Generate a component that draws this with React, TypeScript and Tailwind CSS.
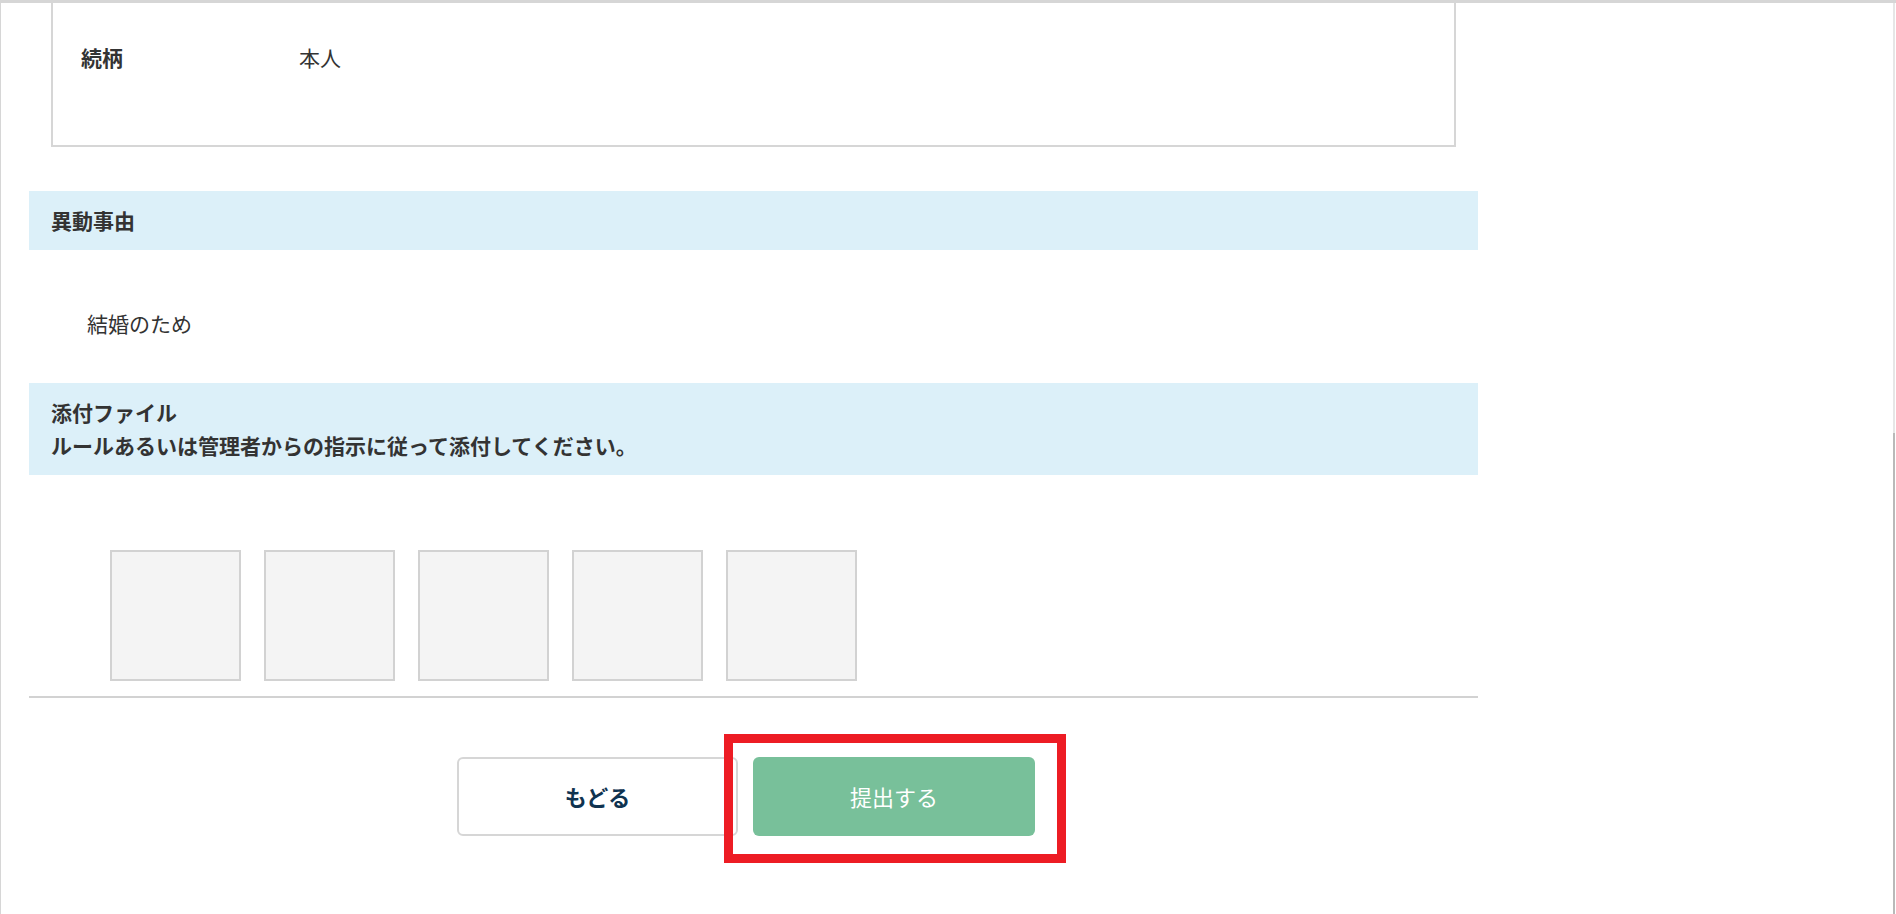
export default function App() {
  const thumbs = [0, 1, 2, 3, 4];

  return (
    <div
      className="relative h-[914px] w-full overflow-hidden border-t-[3px] border-l border-[#d6d6d6] bg-white text-[#333333]"
      style={{ fontFamily: '"Noto Sans CJK JP", "Noto Sans", sans-serif' }}
    >
      {/* scroll track on the right edge */}
      <div className="absolute right-[1px] top-0 h-[430px] w-[2px] bg-[#e6e6e6]" />
      <div className="absolute right-[1px] top-[430px] bottom-0 w-[2px] bg-[#b9b9b9]" />

      <div className="w-[1449px] pl-[28px] box-content">
        {/* relationship card (top part scrolled out) */}
        <div className="mx-[22px] h-[144px] border-x-2 border-b-2 border-[#d6d6d6] pt-[38px]">
          <div className="flex text-[21px] leading-[33px]">
            <div className="w-[246px] pl-[28px] font-bold">続柄</div>
            <div>本人</div>
          </div>
        </div>

        {/* reason */}
        <div className="mt-[44px] bg-[#dcf0f9] px-[22px] py-[13px] text-[21px] font-bold leading-[33px]">
          異動事由
        </div>
        <div className="mt-[57px] pl-[58px] text-[21px] leading-[33px]">結婚のため</div>

        {/* attachments */}
        <div className="mt-[43px] bg-[#dcf0f9] px-[22px] py-[13px] text-[21px] font-bold leading-[33px]">
          <div>添付ファイル</div>
          <div>ルールあるいは管理者からの指示に従って添付してください。</div>
        </div>
        <div className="mt-[75px] flex gap-[23px] pl-[81px]">
          {thumbs.map((t) => (
            <div
              key={t}
              className="h-[131px] w-[131px] border-2 border-[#d2d2d2] bg-[#f4f4f4]"
            />
          ))}
        </div>
        <div className="mt-[15px] h-[2px] bg-[#d2d2d2]" />

        {/* actions */}
        <div className="mt-[59px] flex justify-center gap-[15px] pr-[15px]">
          <button className="h-[79px] w-[281px] rounded-[6px] border-2 border-[#d6d6d6] bg-white text-[22px] font-bold text-[#0f3350]">
            もどる
          </button>
          <div className="relative">
            <div className="absolute -left-[29px] -right-[31px] -top-[23px] -bottom-[27px] border-[9px] border-[#ed1c24]" />
            <button className="relative h-[79px] w-[282px] rounded-[6px] bg-[#78c09a] text-[22px] text-white">
              提出する
            </button>
          </div>
        </div>
      </div>
    </div>
  );
}
